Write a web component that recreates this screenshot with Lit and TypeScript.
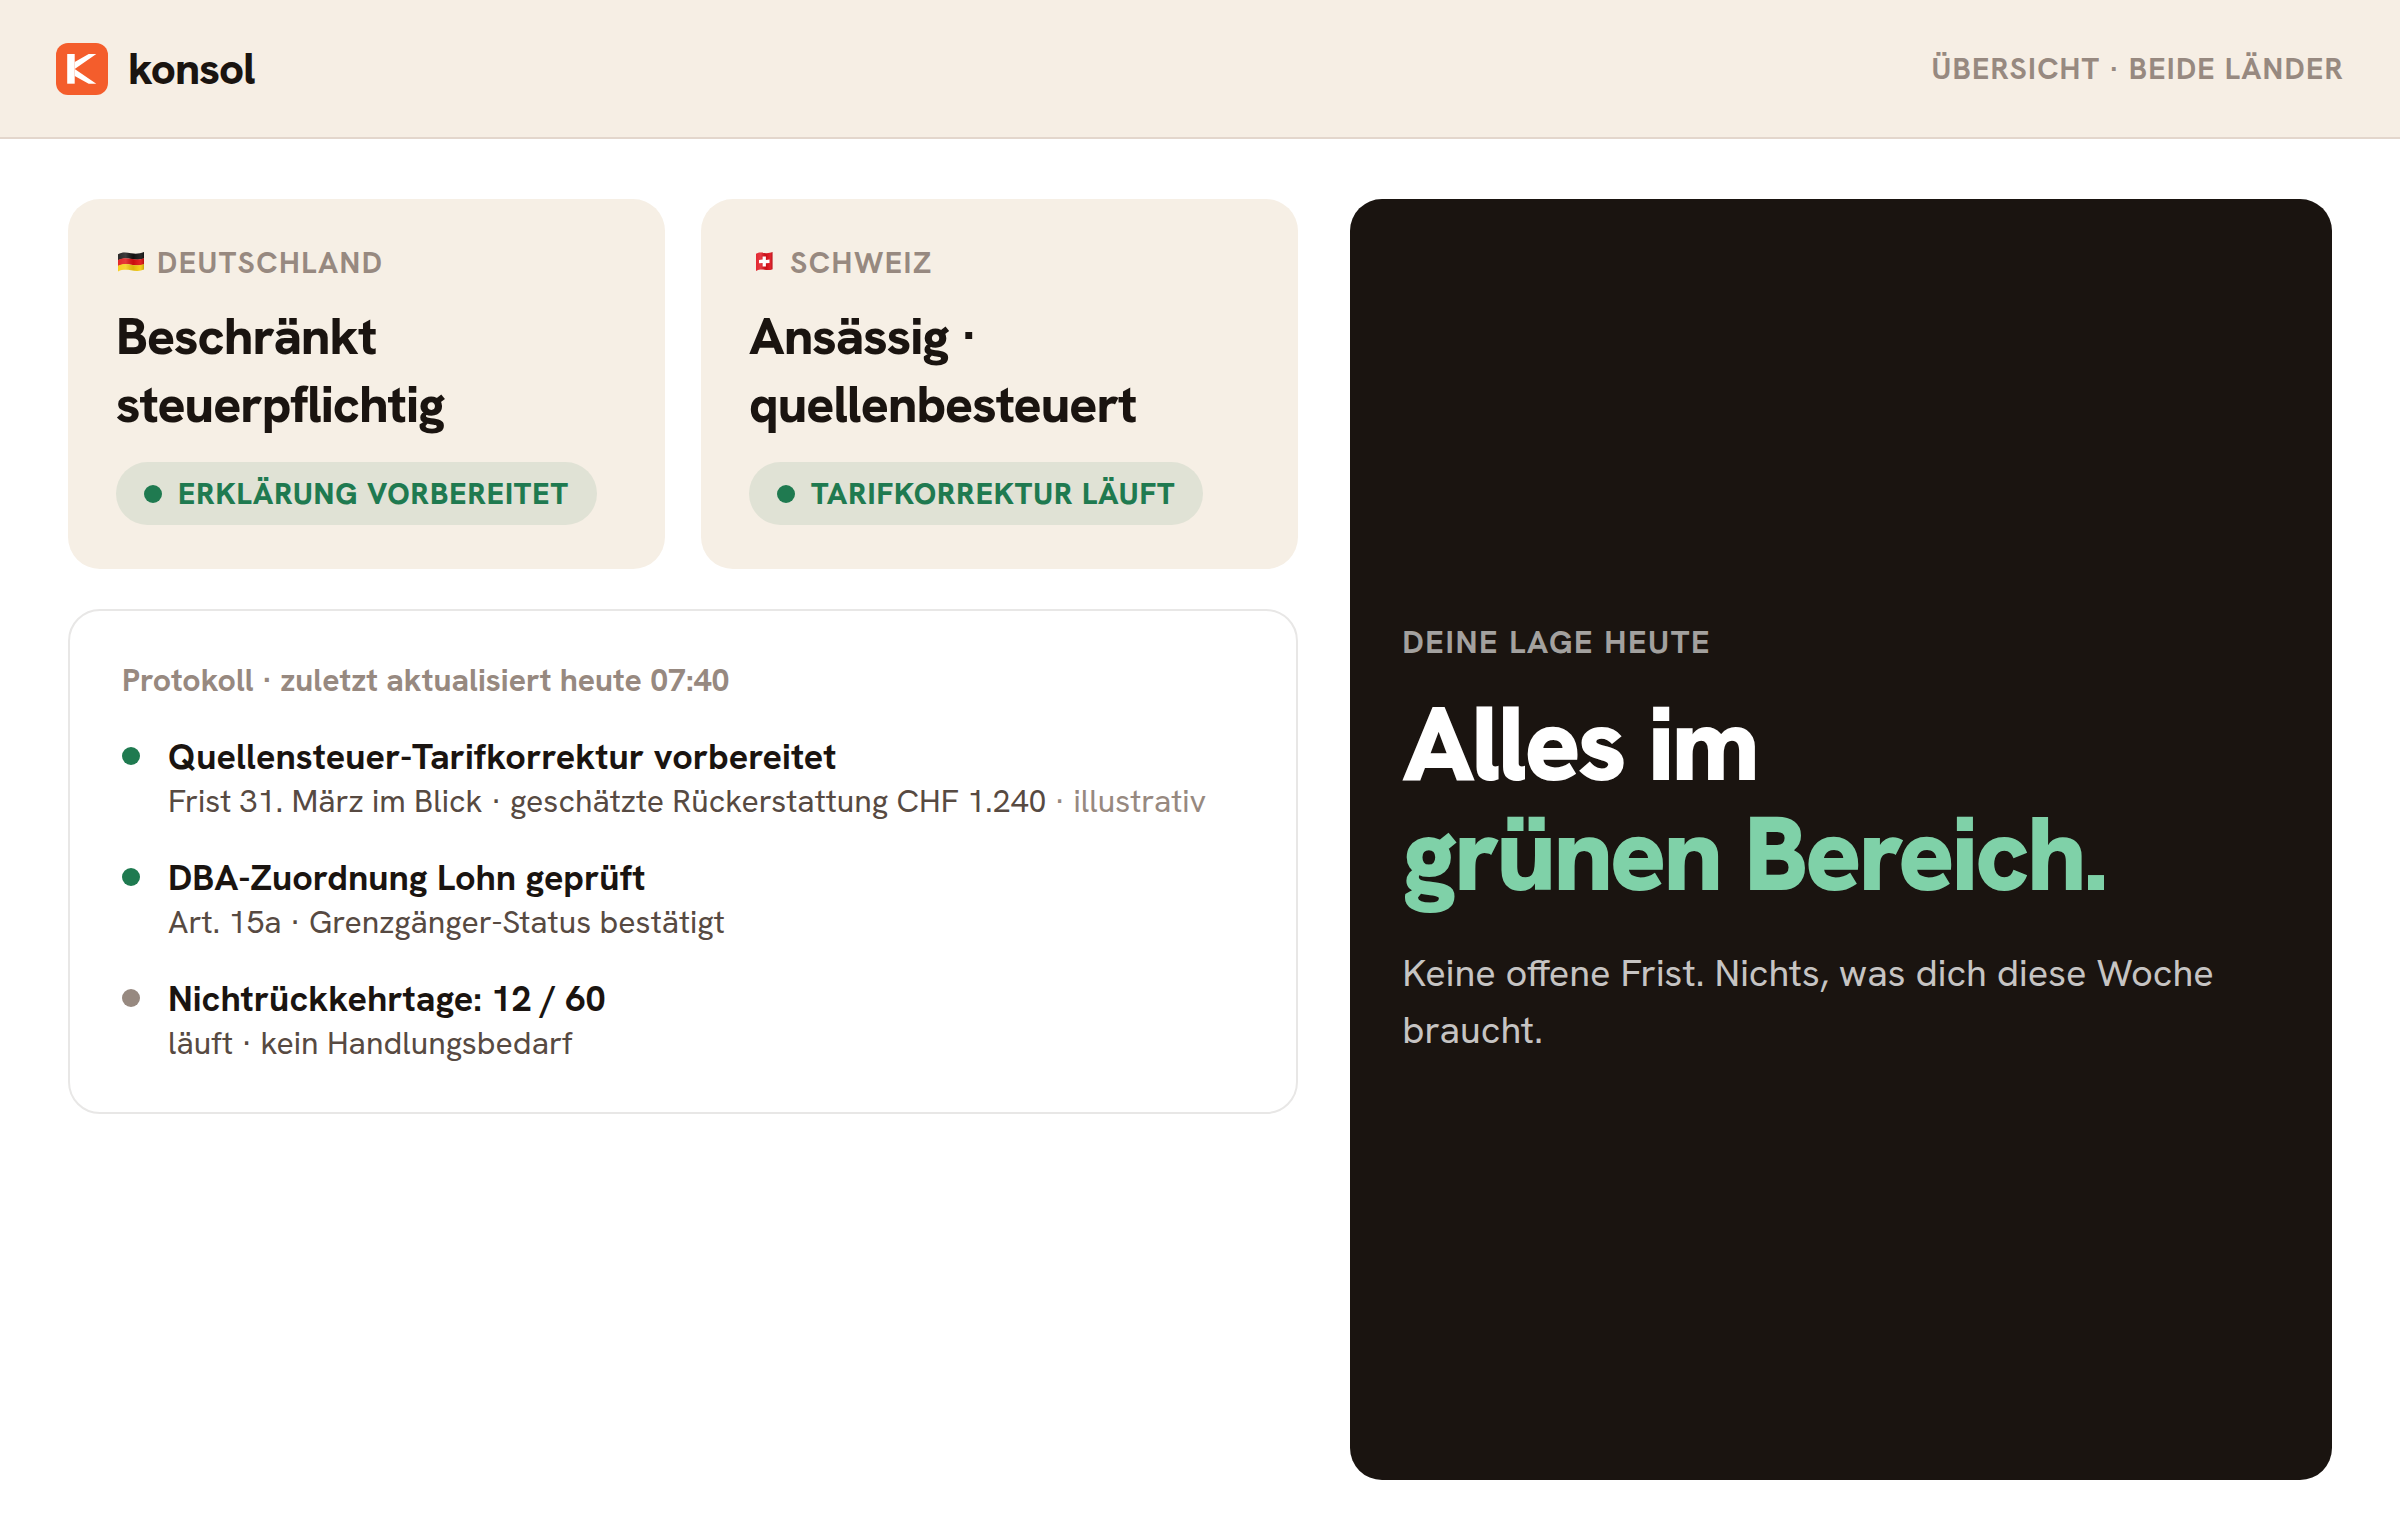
import { LitElement, html, css, svg, nothing } from "lit";
import { customElement, property } from "lit/decorators.js";

type Tone = "ok" | "idle";

interface LogEntry {
  tone: Tone;
  title: string;
  detail: string;
  note?: string;
}

const entries: LogEntry[] = [
  {
    tone: "ok",
    title: "Quellensteuer-Tarifkorrektur vorbereitet",
    detail: "Frist 31. März im Blick · geschätzte Rückerstattung CHF 1.240",
    note: "· illustrativ",
  },
  {
    tone: "ok",
    title: "DBA-Zuordnung Lohn geprüft",
    detail: "Art. 15a · Grenzgänger-Status bestätigt",
  },
  {
    tone: "idle",
    title: "Nichtrückkehrtage: 12 / 60",
    detail: "läuft · kein Handlungsbedarf",
  },
];

const shade = svg`
  <linearGradient id="fold" x1="0" x2="1" y1="0" y2="0">
    <stop offset="0" stop-color="#fff" stop-opacity="0.1" />
    <stop offset="0.3" stop-color="#fff" stop-opacity="0.18" />
    <stop offset="0.6" stop-color="#000" stop-opacity="0.1" />
    <stop offset="0.85" stop-color="#fff" stop-opacity="0.08" />
    <stop offset="1" stop-color="#000" stop-opacity="0.2" />
  </linearGradient>`;

const flags = {
  de: html`<svg class="flag" viewBox="0 0 30 21" aria-hidden="true">
    <defs>${shade}</defs>
    <path fill="#141212" d="M2 2.2C6 -.2 10 .2 15 1.2S24 1.6 28 0V6.6C24 8.2 20 7.8 15 6.9S6 6.4 2 8.4Z" />
    <path fill="#e01010" d="M2 7.9C6 5.9 10 5.9 15 6.8S24 7.6 28 6.2V12.4C24 14 20 13.6 15 12.7S6 12.2 2 14.2Z" />
    <path fill="#f6cb0a" d="M2 13.8C6 11.8 10 11.8 15 12.7S24 13.5 28 12V17.6C24 19.4 20 19 15 18.3S6 17.6 2 19.4Z" />
    <path fill="url(#fold)" d="M2 2.2C6 -.2 10 .2 15 1.2S24 1.6 28 0V17.6C24 19.4 20 19 15 18.3S6 17.6 2 19.4Z" />
  </svg>`,
  ch: html`<svg class="flag" viewBox="0 0 30 21" aria-hidden="true">
    <defs>${shade}</defs>
    <path fill="#e0101a" d="M7 1.8C10 .2 12 .4 15.5 1S21 .8 23.5 0V17.2C21 18.4 19 18.2 15.5 17.8S10 17.6 7 18.9Z" />
    <path fill="url(#fold)" d="M7 1.8C10 .2 12 .4 15.5 1S21 .8 23.5 0V17.2C21 18.4 19 18.2 15.5 17.8S10 17.6 7 18.9Z" />
    <path fill="#fff" d="M13.6 4.4L16.9 4.6V7.9L20.5 7.6V10.9L16.9 11.2V14.6L13.6 14.4V11L10 11.2V7.9L13.6 7.6Z" />
  </svg>`,
};

@customElement("status-card")
export class StatusCard extends LitElement {
  @property() flag: "de" | "ch" = "de";
  @property() country = "";
  @property() heading = "";
  @property() status = "";

  static styles = css`
    :host {
      display: block;
      box-sizing: border-box;
      padding: 44px 48px;
      border-radius: 32px;
      background: #f6efe5;
    }
    .country {
      display: flex;
      align-items: center;
      gap: 11px;
      margin: 0;
      font-size: 30px;
      font-weight: 700;
      letter-spacing: 0.05em;
      text-transform: uppercase;
      color: #978980;
    }
    .flag {
      display: block;
      width: 30px;
      height: 21px;
      flex: none;
    }
    .heading {
      margin: 20px 0 24px;
      font-size: 52px;
      font-weight: 800;
      letter-spacing: -0.02em;
    }
    .pill {
      display: inline-flex;
      align-items: center;
      gap: 16px;
      padding: 12px 28px;
      border-radius: 40px;
      vertical-align: top;
      background: #e0e2d5;
      color: #1f7a50;
      font-size: 30px;
      font-weight: 800;
      letter-spacing: 0.03em;
      text-transform: uppercase;
    }
    .dot {
      width: 18px;
      height: 18px;
      border-radius: 50%;
      background: currentColor;
    }
  `;

  render() {
    return html`
      <p class="country">${flags[this.flag]}<span>${this.country}</span></p>
      <h2 class="heading">${this.heading}</h2>
      <span class="pill"><span class="dot"></span>${this.status}</span>
    `;
  }
}

@customElement("activity-log")
export class ActivityLog extends LitElement {
  static styles = css`
    :host {
      display: block;
      box-sizing: border-box;
      padding: 48px 52px;
      border: 2px solid #e8e7e6;
      border-radius: 32px;
      background: #fff;
    }
    .caption {
      margin: 0 0 32px;
      font-size: 32px;
      font-weight: 700;
      color: #978980;
    }
    .list {
      display: flex;
      flex-direction: column;
      gap: 32px;
      margin: 0;
      padding: 0;
      list-style: none;
    }
    .entry {
      display: flex;
      gap: 28px;
    }
    .dot {
      flex: none;
      width: 18px;
      height: 18px;
      margin-top: 14px;
      border-radius: 50%;
    }
    .ok {
      background: #1f7a50;
    }
    .idle {
      background: #978980;
    }
    .title {
      margin: 0;
      font-size: 36px;
      font-weight: 700;
      color: #1a1410;
    }
    .detail {
      display: flex;
      flex-wrap: wrap;
      column-gap: 8px;
      margin: 0;
      font-size: 32px;
      color: #574a42;
    }
    .note {
      color: #978980;
    }
  `;

  render() {
    return html`
      <h2 class="caption">Protokoll · zuletzt aktualisiert heute 07:40</h2>
      <ul class="list">
        ${entries.map(
          (e) => html`<li class="entry">
            <span class="dot ${e.tone}"></span>
            <div>
              <h3 class="title">${e.title}</h3>
              <p class="detail"><span>${e.detail}</span>${e.note ? html` <span class="note">${e.note}</span>` : nothing}</p>
            </div>
          </li>`
        )}
      </ul>
    `;
  }
}

@customElement("app-root")
export class AppRoot extends LitElement {
  static styles = css`
    :host {
      display: flex;
      flex-direction: column;
      min-height: 100vh;
      background: #fff;
      color: #1a1410;
      font-family: "Hanken Grotesk", Roboto, "Liberation Sans", sans-serif;
      -webkit-font-smoothing: antialiased;
    }
    .bar {
      display: flex;
      align-items: center;
      justify-content: space-between;
      padding: 40px 56px;
      border-bottom: 2px solid #e3d6cc;
      background: #f6eee4;
    }
    .brand {
      display: flex;
      align-items: center;
      gap: 20px;
      font-size: 44px;
      font-weight: 800;
      letter-spacing: -0.02em;
    }
    .logo {
      display: block;
      width: 52px;
      height: 52px;
    }
    .scope {
      font-size: 30px;
      font-weight: 700;
      letter-spacing: 0.04em;
      text-transform: uppercase;
      color: #978980;
    }
    .content {
      flex: 1;
      display: grid;
      grid-template-columns: 1.253fr 1fr;
      gap: 52px;
      padding: 60px 68px;
    }
    .left {
      display: flex;
      flex-direction: column;
      gap: 40px;
    }
    .cards {
      display: grid;
      grid-template-columns: 1fr 1fr;
      gap: 36px;
    }
    .summary {
      display: flex;
      flex-direction: column;
      justify-content: center;
      padding: 52px;
      border-radius: 32px;
      background: #1a1410;
      color: #fff;
    }
    .eyebrow {
      margin: 0;
      font-size: 32px;
      font-weight: 700;
      letter-spacing: 0.05em;
      text-transform: uppercase;
      color: #a3a19f;
    }
    .headline {
      margin: 26px 0 36px;
      font-size: 104px;
      font-weight: 900;
      line-height: 110px;
      letter-spacing: -0.03em;
    }
    .accent {
      display: block;
      color: #7fd1a8;
    }
    .lead {
      margin: 0;
      font-size: 38px;
      line-height: 57px;
      color: #c6c4c3;
    }
  `;

  render() {
    return html`
      <header class="bar">
        <div class="brand">
          <svg class="logo" viewBox="0 0 52 52" aria-hidden="true">
            <rect width="52" height="52" rx="12" fill="#f45d2c" />
            <path fill="#fff" d="M11.2 11H18.7V40.7H11.2Z" />
            <path fill="#fff" d="M18.7 18.9L32.7 11H40.3L18.7 26L40.3 40.7H32.7L18.7 33Z" />
          </svg>
          <span>konsol</span>
        </div>
        <span class="scope">Übersicht · beide Länder</span>
      </header>
      <main class="content">
        <div class="left">
          <div class="cards">
            <status-card flag="de" country="Deutschland" heading="Beschränkt steuerpflichtig" status="Erklärung vorbereitet"></status-card>
            <status-card flag="ch" country="Schweiz" heading="Ansässig · quellenbesteuert" status="Tarifkorrektur läuft"></status-card>
          </div>
          <activity-log></activity-log>
        </div>
        <section class="summary">
          <p class="eyebrow">Deine Lage heute</p>
          <h1 class="headline">Alles im <span class="accent">grünen Bereich.</span></h1>
          <p class="lead">Keine offene Frist. Nichts, was dich diese Woche braucht.</p>
        </section>
      </main>
    `;
  }
}
